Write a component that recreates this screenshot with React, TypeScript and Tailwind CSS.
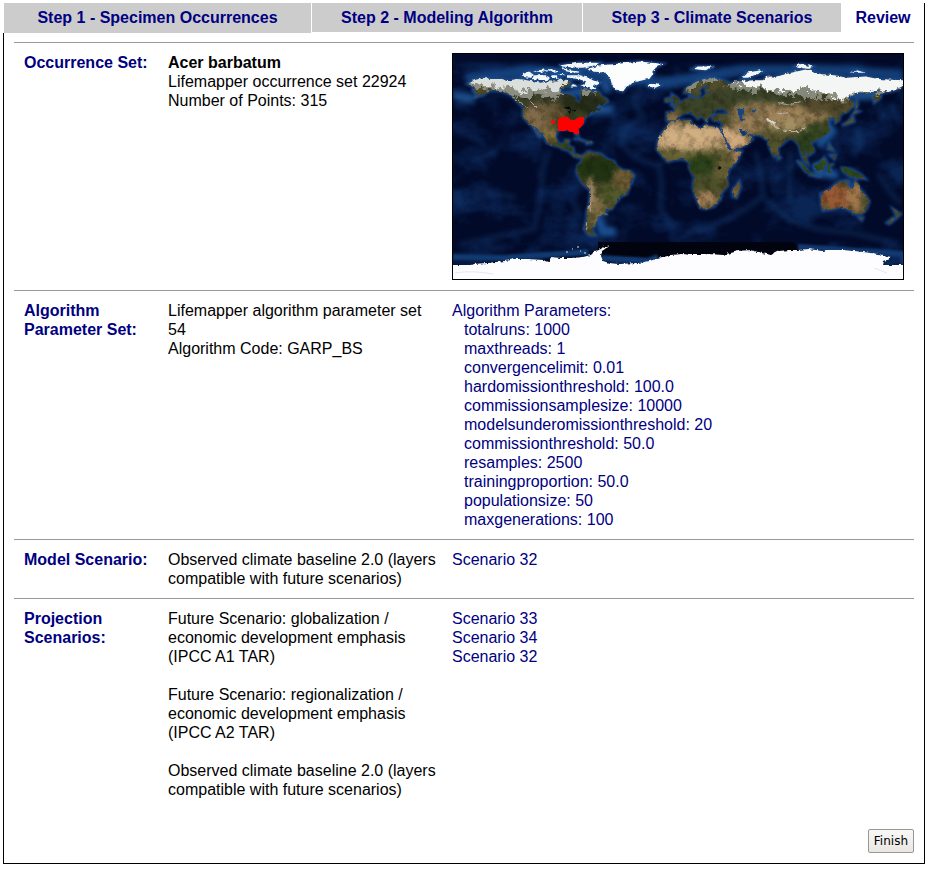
import type { ReactNode } from "react";

// Continent outlines as longitude / latitude pairs.
const NORTH_AMERICA =
  "M-168 66L-163 64L-161 60L-165 62L-162 58L-158 58L-164 55L-156 57L-152 60L-147 61L-140 60L-135 58L-131 55L-128 51L-124 48L-124 43L-124 40L-121 36L-117 33L-115 30L-112 27L-110 23L-112 25L-114 29L-115 32L-113 31L-110 27L-108 25L-105 21L-105 19L-100 17L-95 16L-92 14L-88 13L-86 11L-83 8L-79 7L-77 8L-80 9L-83 10L-84 15L-88 16L-87 21L-90 21L-91 18L-95 18L-98 22L-97 28L-93 30L-89 30L-85 30L-83 29L-82 26L-80 25L-81 31L-76 35L-74 40L-70 42L-66 45L-61 46L-65 48L-60 50L-56 52L-57 54L-61 56L-64 60L-69 59L-70 61L-77 62L-78 58L-77 54L-79 51L-82 53L-82 55L-88 57L-94 59L-94 62L-88 65L-86 68L-92 69L-95 71L-96 68L-105 68L-110 67L-115 68L-120 69L-128 70L-135 69L-142 70L-150 70L-156 71L-163 69Z";
const ARCTIC_ISLANDS =
  "M-66 62L-72 63L-78 65L-73 68L-80 70L-88 71L-88 73L-78 73L-70 70L-62 67L-65 65L-68 66ZM-125 72L-120 71L-115 73L-119 76L-124 74ZM-117 70L-105 69L-102 71L-106 73L-115 73ZM-102 71L-96 70L-97 73L-101 73ZM-116 76L-106 75L-108 76L-104 77L-98 75L-94 76L-102 78L-112 77ZM-90 76L-80 75L-78 76L-88 77L-92 80L-82 79L-76 79L-66 81L-63 83L-80 83L-94 81ZM-94 73L-90 73L-92 74L-95 74ZM-86 64L-80 64L-84 66Z";
const GREENLAND =
  "M-73 78L-68 76L-58 75L-54 70L-53 66L-49 61L-44 60L-41 64L-33 68L-23 70L-20 74L-18 79L-12 82L-30 84L-50 82L-62 81Z";
const SOUTH_AMERICA =
  "M-77 8L-72 12L-68 11L-62 10L-57 6L-51 4L-49 0L-44 -3L-38 -4L-35 -7L-37 -12L-39 -17L-41 -22L-46 -24L-49 -28L-53 -34L-58 -35L-57 -38L-62 -39L-65 -42L-66 -46L-69 -51L-66 -55L-71 -55L-75 -50L-73 -42L-73 -36L-71 -30L-70 -19L-76 -14L-80 -7L-81 -4L-80 1L-77 4Z";
const AFRICA =
  "M-6 36L2 37L10 37L11 34L19 30L21 33L32 31L34 28L37 22L40 15L43 12L51 12L47 4L41 -2L39 -8L40 -15L35 -21L34 -26L29 -32L22 -34L18 -33L14 -24L12 -17L13 -9L9 -1L9 4L4 6L-4 5L-8 4L-13 9L-17 14L-16 20L-13 27L-9 31Z";
const MADAGASCAR = "M49 -12L50 -16L47 -25L44 -24L44 -18L47 -15Z";
const EURASIA =
  "M-9 37L-9 43L-2 44L-1 46L-4 48L2 50L5 53L9 54L9 57L12 54L20 55L24 59L30 60L22 60L22 63L25 66L20 64L17 61L18 58L13 55L11 59L5 59L6 62L15 68L25 71L32 70L41 67L38 64L34 66L40 65L46 68L60 69L68 69L72 73L76 71L82 73L95 76L104 78L113 74L125 73L135 71L150 72L160 70L180 69L180 65L177 62L170 60L163 59L162 55L157 51L156 57L163 62L155 59L143 59L136 55L141 50L136 44L130 42L129 37L126 35L125 39L118 39L122 37L119 35L122 30L119 25L110 21L106 19L109 12L105 9L101 13L104 2L100 6L98 12L97 17L91 23L87 21L80 15L80 10L77 8L73 16L72 21L66 25L57 26L51 30L48 30L52 24L56 26L60 22L54 17L44 13L39 21L35 29L35 36L28 37L27 40L33 42L41 42L37 46L30 46L28 42L24 40L23 36L19 41L13 46L18 40L16 38L11 43L5 43L0 40L-2 37Z";
const SEAS = "M47 46L52 47L54 44L51 41L54 37L50 37L49 41ZM58 45L62 46L61 43Z";
const AUSTRALIA =
  "M114 -22L122 -18L126 -14L130 -12L136 -12L135 -15L140 -18L142 -11L146 -19L150 -23L153 -28L151 -34L147 -38L141 -38L137 -35L131 -32L124 -34L116 -35L115 -30Z";
const ISLANDS =
  "M-5 50L1 51L1 53L-2 56L-5 58L-5 55L-3 53ZM-10 52L-6 52L-6 55L-10 54ZM95 5L100 2L106 -6L102 -4ZM106 -7L115 -8L107 -6ZM109 1L113 3L117 7L119 4L116 -4L111 -3ZM120 1L125 2L121 0L123 -5L120 -5ZM131 -1L138 -2L147 -7L150 -10L143 -9L138 -8L132 -4ZM121 18L124 13L120 14ZM122 9L126 9L125 6ZM131 33L136 36L140 40L141 36L136 34ZM140 42L145 44L142 45ZM80 9L82 7L80 6ZM-84 22L-78 22L-74 20L-80 22ZM-73 20L-68 19L-73 18ZM172 -34L178 -38L175 -41L174 -38ZM172 -41L174 -42L169 -46L167 -45ZM145 -41L148 -41L147 -43ZM142 46L144 49L143 54Z";
const SNOW_NORTH =
  "M-172 68L-160 62L-150 61L-140 60L-133 55L-129 56L-122 54L-114 57L-108 56L-100 55L-92 56L-91 60L-94 64L-84 68L-90 74L-172 74ZM-80 64L-76 58L-68 57L-63 59L-66 64Z";
const SNOW_ASIA =
  "M4 58L10 60L16 65L28 68L35 67L30 73L22 73L12 70L4 63ZM38 64L58 60L66 61L80 58L97 57L108 54L121 55L127 52L137 54L145 58L157 59L160 56L163 58L182 60L182 72L160 74L135 76L110 79L85 77L70 75L46 70Z";
const ARCTIC_RUSSIA =
  "M51 71L56 71L68 76L66 77L55 75ZM12 78L22 77L29 80L15 80ZM94 80L104 78L108 80L98 82ZM138 75L150 75L143 77ZM-24 64L-18 63L-14 65L-18 66L-24 66Z";
const ANTARCTICA =
  "M-9 211L18 211L20 210L35 209L52 207L62 205L75 205L90 206L96 208L98 203L107 204L118 204L130 203L138 201L142 197L148 195L150 193L156 191L152 195L149 197L148 202L150 207L156 209L165 210L185 209L197 207L205 204L218 201L228 200L240 201L253 201L255 200L270 201L277 199L283 198L285 197L298 196L305 198L318 201L326 197L336 196L345 196L355 195L370 197L373 196L390 196L410 198L425 200L438 203L436 205L431 207L430 211L460 211V240H-9Z";

const LAND = [NORTH_AMERICA, SOUTH_AMERICA, AFRICA, MADAGASCAR, EURASIA, AUSTRALIA, ISLANDS].join("");
const ICE = ARCTIC_ISLANDS + GREENLAND + ARCTIC_RUSSIA;
const PROJECT = "scale(1.25 -1.25) translate(180 -90)";

// Ground cover: centre, radii and colour of each soft patch.
const COVER: [number, number, number, number, string][] = [
  [-105, 56, 45, 9, "#3c4029"],
  [-75, 49, 20, 9, "#262d1a"],
  [-112, 39, 12, 11, "#806a49"],
  [-98, 41, 9, 10, "#665737"],
  [-82, 37, 10, 8, "#384323"],
  [-103, 25, 6, 6, "#86703f"],
  [-90, 15, 9, 5, "#34471f"],
  [-64, -2, 18, 11, "#203413"],
  [-44, -10, 8, 10, "#6e5b35"],
  [-55, -23, 11, 8, "#525a2b"],
  [-64, -36, 7, 12, "#776941"],
  [-70, -22, 3, 14, "#a98d68"],
  [8, 24, 42, 11, "#c9a77c"],
  [45, 22, 13, 10, "#cba379"],
  [8, 9, 32, 4, "#6a6537"],
  [20, 1, 15, 8, "#2c421b"],
  [36, -3, 8, 9, "#665f35"],
  [24, -14, 12, 6, "#4b5029"],
  [22, -26, 10, 6, "#a5825b"],
  [48, 7, 6, 6, "#a88359"],
  [46, -19, 3, 7, "#80623d"],
  [20, 49, 34, 9, "#3c4529"],
  [-4, 40, 7, 5, "#806c46"],
  [68, 57, 45, 7, "#3c4429"],
  [65, 43, 25, 9, "#84704c"],
  [57, 33, 15, 7, "#9b8058"],
  [94, 42, 28, 7, "#a0845a"],
  [88, 33, 17, 5, "#a48e62"],
  [118, 49, 20, 7, "#544b2e"],
  [76, 21, 8, 9, "#58572f"],
  [112, 27, 11, 8, "#384824"],
  [102, 18, 9, 9, "#2c411e"],
  [122, -2, 32, 8, "#2b4a20"],
  [125, -25, 15, 11, "#975934"],
  [143, -25, 9, 11, "#a0764a"],
  [150, -30, 4, 12, "#535030"],
  [117, -33, 5, 3, "#6a5830"],
];

const RIDGES =
  "M-30 63L-36 52L-28 40L-43 29L-45 18L-34 7L-15 0L-13 -15L-14 -34L-5 -48M5 -54L28 -48L52 -35L68 -24L66 -5L62 12M70 -26L90 -43L112 -50L140 -53L176 -62M-175 -63L-145 -56L-115 -50L-110 -25L-108 0L-103 13M-178 48L-163 54M-175 28L-156 20M-178 -18L-174 -32M143 30L146 17L140 8M160 -5L168 -18L178 -30M90 12L89 -28M-85 -25L-78 -40M175 40L170 50M-155 -20L-130 -25M-165 5L-145 12";

function WorldMap() {
  return (
    <svg viewBox="0 0 450 225" className="block w-full border border-black bg-[#020a29]" role="img" aria-label="Occurrence points on a world map">
      <defs>
        <clipPath id="land">
          <path d={LAND} transform={PROJECT} />
        </clipPath>
        <filter id="soft" x="-20%" y="-20%" width="140%" height="140%" colorInterpolationFilters="sRGB">
          <feGaussianBlur stdDeviation="2.6" />
        </filter>
        <filter id="shelf" x="-20%" y="-20%" width="140%" height="140%" colorInterpolationFilters="sRGB">
          <feGaussianBlur stdDeviation="1" />
        </filter>
        <filter id="depths" x="0" y="0" width="100%" height="100%" colorInterpolationFilters="sRGB">
          <feTurbulence type="fractalNoise" baseFrequency="0.022 0.03" numOctaves="5" seed="8" />
          <feColorMatrix values="0 0 0 0 0.06  0 0 0 0 0.2  0 0 0 0 0.42  3.2 0 0 0 -1.4" />
        </filter>
        <filter id="shade" x="0" y="0" width="100%" height="100%" colorInterpolationFilters="sRGB">
          <feTurbulence type="fractalNoise" baseFrequency="0.12" numOctaves="5" seed="3" />
          <feColorMatrix values="0 0 0 0 0.1  0 0 0 0 0.1  0 0 0 0 0.04  2.6 0 0 0 -1.1" />
        </filter>
        <filter id="ragged" x="-5%" y="-20%" width="110%" height="140%" colorInterpolationFilters="sRGB">
          <feTurbulence type="fractalNoise" baseFrequency="0.16" numOctaves="4" seed="5" result="n" />
          <feDisplacementMap in="SourceGraphic" in2="n" scale="14" xChannelSelector="R" yChannelSelector="G" />
          <feGaussianBlur stdDeviation="0.7" />
        </filter>
        <filter id="coast" x="-5%" y="-5%" width="110%" height="110%" colorInterpolationFilters="sRGB">
          <feTurbulence type="fractalNoise" baseFrequency="0.25" numOctaves="2" seed="11" result="n" />
          <feDisplacementMap in="SourceGraphic" in2="n" scale="4" xChannelSelector="R" yChannelSelector="G" />
        </filter>
      </defs>

      <rect width="450" height="225" filter="url(#depths)" opacity="0.65" />
      <g filter="url(#soft)" fill="none">
        <g transform={PROJECT}>
          <path d={RIDGES} stroke="#174178" strokeWidth="4" opacity="0.4" />
          <path d="M-170 70L-120 76L-70 74L-10 67L10 70L50 77L120 77L180 73" stroke="#164684" strokeWidth="9" opacity="0.85" />
          <path d="M-95 56L-80 60L-65 56M-60 68L-55 60M-70 45L-52 46M138 56L160 57M-180 57L-163 54" stroke="#1b4d8a" strokeWidth="7" />
          <path d="M110 3L112 -5L128 -7M118 36L123 28L112 17M132 -14L140 -14M-64 -40L-60 -52L-50 -52" stroke="#1b4f91" strokeWidth="7" />
        </g>
        <path d="M0 4H450" stroke="#020a29" strokeWidth="10" />
      </g>
      <path d="M145 188H340L346 194V203H145Z" fill="#01030f" />
      <path d="M0 203L50 204L135 198M148 204L195 207L205 203M345 193L450 200V210" stroke="#113a70" strokeWidth="6" fill="none" filter="url(#shelf)" />
      <path d={LAND + ICE} transform={PROJECT} fill="none" stroke="#1d5195" strokeWidth="2.4" opacity="0.85" filter="url(#shelf)" />

      <g filter="url(#coast)">
        <g clipPath="url(#land)">
          <rect width="450" height="225" fill="#504e2d" />
          <g filter="url(#soft)">
            {COVER.map(([lon, lat, rx, ry, color], i) => (
              <ellipse key={i} cx={lon} cy={lat} rx={rx} ry={ry} fill={color} transform={PROJECT} />
            ))}
          </g>
          <rect width="450" height="225" filter="url(#shade)" opacity="0.4" />
          <path
            d="M-14 24L10 28L30 23M-8 20L12 20L25 27M38 27L50 19"
            transform={PROJECT}
            fill="none"
            stroke="#dab889"
            strokeWidth="5"
            opacity="0.6"
            filter="url(#soft)"
          />
          <g filter="url(#ragged)">
            <path d={SNOW_NORTH} transform={PROJECT} fill="#a5a79f" opacity="0.75" />
            <path
              d="M-170 70L-160 66L-151 64L-137 64L-126 60L-108 62L-98 59L-91 64L-86 69L-92 75L-170 75Z"
              transform={PROJECT}
              fill="#e9ecec"
              opacity="0.85"
            />
            <path d={SNOW_ASIA} transform={PROJECT} fill="#b4b8b2" opacity="0.6" />
            <path
              d="M44 67L62 64L70 62L82 61L105 62L119 58L130 54L140 58L160 61L165 58L182 63V72L160 74L135 76L104 80L75 77L68 70L46 71Z"
              transform={PROJECT}
              fill="#fbfcfc"
              opacity="0.95"
            />
          </g>
        </g>
        <path d={SEAS} transform={PROJECT} fill="#164481" />
        <path
          d="M-92 47L-87 48L-85 46L-88 46ZM-88 45L-86 42L-85 45ZM-84 45L-80 45L-83 43ZM-83 42L-79 43ZM31 0L34 0L33 -3Z"
          transform={PROJECT}
          fill="#05060a"
        />
        <path d={ARCTIC_ISLANDS + ARCTIC_RUSSIA} transform={PROJECT} fill="#f4f7f7" />
        <g transform={PROJECT} fill="none" stroke="#d6d3ca" strokeWidth="0.8">
          <path d="M-133 56L-125 50L-121 47M-118 52L-113 47M81 51L90 49L98 52M88 43L80 42" opacity="0.7" />
          <path d="M72 38L75 34L80 31L88 28L97 28L102 31" opacity="0.7" />
          <path d="M70 38L75 36L78 34" strokeWidth="2" />
          <path d="M-71 -28L-70 -36M-73 -45L-74 -51" opacity="0.6" />
        </g>
        <path d={GREENLAND} transform={PROJECT} fill="#fcfefe" />
      </g>
      <path d={ANTARCTICA} fill="#fdfdff" filter="url(#coast)" />
      <path d="M113 198h2M119 195h1M124 193h2M127 197h1M131 199h2" stroke="#d8e1ea" />
      <path d="M2 219Q18 216 40 220M421 214L434 219" stroke="#e4e7ef" fill="none" />

      <path
        fill="#ff0000"
        d="M105 67L106 64L109 63H115L118 66L122 66L124 64L127 63H131V69L129 72L127 74L125 75L126 77V80H122L120 78H117L114 76L112 77H106L105 75ZM99 66H101V67H102V70H100V69H98V67H99Z"
      />
    </svg>
  );
}

function Tab({ children }: { children: ReactNode }) {
  return (
    <button type="button" className="h-[29px] cursor-pointer whitespace-nowrap bg-[#cccccc] text-center font-bold first:h-[30px] first:pb-px">
      {children}
    </button>
  );
}

function Row({ title, details, children }: { title: string; details: ReactNode; children: ReactNode }) {
  return (
    <section className="grid grid-cols-[144px_284fr_452fr] border-t border-[#999999] p-2.5">
      <h2 className="pr-4 font-bold text-[#000080]">{title}</h2>
      <div className="pr-3">{details}</div>
      <div className="text-[#000080]">{children}</div>
    </section>
  );
}

const PARAMETERS = [
  ["totalruns", "1000"],
  ["maxthreads", "1"],
  ["convergencelimit", "0.01"],
  ["hardomissionthreshold", "100.0"],
  ["commissionsamplesize", "10000"],
  ["modelsunderomissionthreshold", "20"],
  ["commissionthreshold", "50.0"],
  ["resamples", "2500"],
  ["trainingproportion", "50.0"],
  ["populationsize", "50"],
  ["maxgenerations", "100"],
];

export default function App() {
  return (
    <div className="bg-white pt-[3px] pr-1 pb-1 pl-[3px] font-['Liberation_Sans',Arial,sans-serif] text-base leading-[19px] text-black">
      <nav className="grid h-[30px] grid-cols-[307fr_270fr_258fr_82fr] items-start gap-x-px border-r border-black pl-px text-[#000080]">
        <Tab>Step 1 - Specimen Occurrences</Tab>
        <Tab>Step 2 - Modeling Algorithm</Tab>
        <Tab>Step 3 - Climate Scenarios</Tab>
        <button type="button" aria-current="step" className="h-[29px] text-center font-bold">
          Review
        </button>
      </nav>
      <main className="border-x border-b border-black px-2.5 pt-[9px] pb-2.5">
        <Row
          title="Occurrence Set:"
          details={
            <>
              <p className="font-bold">Acer barbatum</p>
              <p>Lifemapper occurrence set 22924</p>
              <p>Number of Points: 315</p>
            </>
          }
        >
          <WorldMap />
        </Row>
        <Row
          title="Algorithm Parameter Set:"
          details={
            <>
              <p>Lifemapper algorithm parameter set 54</p>
              <p>Algorithm Code: GARP_BS</p>
            </>
          }
        >
          <p>Algorithm Parameters:</p>
          <ul className="pl-3">
            {PARAMETERS.map(([name, value]) => (
              <li key={name}>
                {name}: {value}
              </li>
            ))}
          </ul>
        </Row>
        <Row title="Model Scenario:" details={<p>Observed climate baseline 2.0 (layers compatible with future scenarios)</p>}>
          <a href="#scenario-32">Scenario 32</a>
        </Row>
        <Row
          title="Projection Scenarios:"
          details={
            <div className="flex flex-col gap-[19px]">
              <p>Future Scenario: globalization / economic development emphasis (IPCC A1 TAR)</p>
              <p>Future Scenario: regionalization / economic development emphasis (IPCC A2 TAR)</p>
              <p>Observed climate baseline 2.0 (layers compatible with future scenarios)</p>
            </div>
          }
        >
          <div className="flex flex-col items-start">
            <a href="#scenario-33">Scenario 33</a>
            <a href="#scenario-34">Scenario 34</a>
            <a href="#scenario-32">Scenario 32</a>
          </div>
        </Row>
        <div className="mt-5 flex justify-end">
          <button
            type="button"
            className="h-6 cursor-pointer rounded-xs border border-[#9a9792] bg-linear-to-b from-[#f8f8f7] to-[#e9e7e4] px-[5px] font-['DejaVu_Sans',sans-serif] text-xs"
          >
            Finish
          </button>
        </div>
      </main>
    </div>
  );
}
